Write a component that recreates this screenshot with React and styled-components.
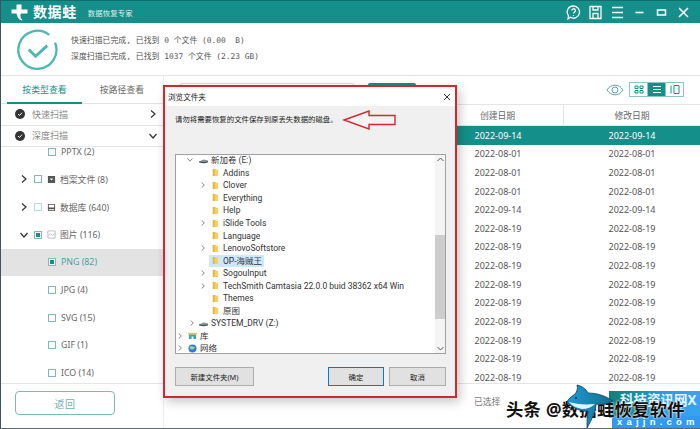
import React from "react";
import styled, { createGlobalStyle } from "styled-components";

const Global = createGlobalStyle`
  html, body { margin: 0; padding: 0; background: #fff; }
  body { font-family: "Noto Sans", "Noto Sans CJK SC", sans-serif; overflow: hidden; }
  * { box-sizing: border-box; }
`;

const teal = "#148f8a";

const Win = styled.div`
  position: relative; width: 700px; height: 429px; background: #fff; overflow: hidden;
  display: flex; flex-direction: column;
  border-left: 1px solid #3c5560; border-bottom: 1px solid #5a6a70;
`;
const Header = styled.header`
  height: 23px; flex: none; background: ${teal}; display: flex; align-items: center; color: #fff;
  border-top: 1px solid #0d6f6c; padding-left: 10px;
`;
const Brand = styled.div`font-size: 14px; font-weight: 700; letter-spacing: .6px; margin-left: 5px; line-height: 22px;`;
const Slogan = styled.div`font-size: 7.4px; margin-left: 11px; opacity: .85; letter-spacing: .1px;`;
const HeadIcons = styled.div`margin-left: auto; display: flex; align-items: center; gap: 7px; padding-right: 9px;`;
const HeadIcon = styled.svg`width: 15px; height: 15px; fill: none; stroke: #fff; stroke-width: 1.3; display: block;`;

const Summary = styled.section`
  height: 53px; flex: none; display: flex; align-items: center; padding-left: 16px; border-bottom: 1px solid #e2e4e4;
`;
const Ok = styled.svg`width: 41px; height: 41px; fill: none; flex: none;`;
const SummaryText = styled.div`
  margin-left: 13px; display: flex; flex-direction: column; gap: 6.5px;
  font-size: 7.9px; line-height: 10px; color: #555; font-family: "DejaVu Sans Mono", "Noto Sans CJK SC", monospace; white-space: pre;
`;

const Main = styled.main`flex: 1; min-height: 0; display: flex;`;
const Side = styled.aside`width: 162px; flex: none; display: flex; flex-direction: column;`;
const Tabs = styled.div`height: 28px; flex: none; display: flex; border-bottom: 1px solid #dfe3e3; padding-left: 6px;`;
const Tab = styled.div`
  width: ${p => p.$on ? "75px" : "80px"}; display: flex; align-items: center; justify-content: center; font-size: 8.8px; letter-spacing: .1px;
  color: ${p => p.$on ? teal : "#666"}; border-bottom: ${p => p.$on ? `2px solid ${teal}` : "none"};
  height: ${p => p.$on ? "28px" : "27px"};
`;
const Acc = styled.div`
  height: 21.5px; flex: none; display: flex; align-items: center; padding-left: 14px; padding-right: 4px;
  border-bottom: 1px solid #e4e6e6; font-size: 9px; color: #888; gap: 7px;
`;
const Dot = styled.svg`width: 10px; height: 10px; flex: none;`;
const AccCaret = styled.svg`width: 8px; height: 8px; margin-left: auto; fill: none; stroke: #333; stroke-width: 1.2; margin-right: 2px;`;
const Tree = styled.div`flex: 1; min-height: 0; overflow: hidden;`;
const TreeInner = styled.div`margin-top: -9px;`;
const TreeRow = styled.div`
  height: 27.65px; display: flex; align-items: center; position: relative;
  padding-left: ${p => p.$child ? "47px" : "19px"};
  background: ${p => p.$on ? "#e3e3e3" : "transparent"};
  font-size: 8.8px; color: ${p => p.$on ? "#3fa5a0" : "#666"};
`;
const Caret = styled.svg`width: 8px; height: 8px; flex: none; fill: none; stroke: #333; stroke-width: 1.2; margin-right: 6px;`;
const Check = styled.span`
  width: 8px; height: 8px; flex: none; border: 1px solid ${p => p.$pale ? "#b5dcda" : "#7fb9b6"}; background: #fff;
  display: flex; align-items: center; justify-content: center; margin-right: 5px;
  &::after { content: ""; display: ${p => p.$on ? "block" : "none"}; width: 4px; height: 4px; background: ${teal}; }
`;
const Glyph = styled.svg`width: 9px; height: 9px; flex: none; margin-right: 4px;`;
const SideFoot = styled.div`height: 45px; flex: none; border-top: 1px solid #e4e6e6; padding: 7px 0 0 14px;`;
const BackBtn = styled.div`
  width: 100px; height: 24px; border: 1px solid #7fb9b6; border-radius: 4px; color: #6fb2ae; font-size: 10px;
  display: flex; align-items: center; justify-content: center; letter-spacing: .5px;
`;

const Right = styled.div`flex: 1; min-width: 0; display: flex; flex-direction: column; border-left: 1px solid #eceeee;`;
const Tools = styled.div`height: 28px; flex: none; display: flex; align-items: flex-start; padding-top: 7px; position: relative;`;
const Search = styled.div`width: 176px; height: 16px; margin-left: 15px; border: 1px solid #ddd; border-radius: 3px;`;
const SearchBtn = styled.div`width: 48px; height: 16px; margin-left: 13px; background: ${teal}; border-radius: 2px;`;
const ViewBox = styled.div`margin-left: auto; display: flex; align-items: center; margin-right: 16px; margin-top: -1px;`;
const Eye = styled.svg`width: 18px; height: 12px; fill: none; stroke: #5aa9a6; stroke-width: 1; margin-right: 6px;`;
const ViewBtn = styled.div`
  width: 19px; height: 15px; display: flex; align-items: center; justify-content: center;
  border: 1px solid #8fc4c1; margin-left: -1px; background: ${p => p.$on ? teal : "#fff"};
`;
const ViewGlyph = styled.svg`width: 10px; height: 9px; fill: none; stroke: ${p => p.$on ? "#fff" : teal}; stroke-width: 1;`;

const Grid = styled.div`
  display: grid; grid-template-columns: 268px 132px 136px; align-items: center;
`;
const THead = styled(Grid)`height: 22px; flex: none; border-bottom: 1px solid #e4e6e6; border-top: 1px solid #e4e6e6; font-size: 8.8px; color: #666;`;
const Th = styled.div`text-align: center; height: 100%; display: flex; align-items: center; justify-content: center; border-right: ${p => p.$line ? "1px solid #e4e6e6" : "none"};`;
const Rows = styled.div`flex: 1; min-height: 0; overflow: hidden;`;
const Row = styled(Grid)`
  height: 18.62px; font-size: 9px; color: ${p => p.$on ? "#fff" : "#555"};
  background: ${p => p.$on ? teal : "#fff"};
`;
const Td = styled.div`text-align: center;`;
const Foot = styled.div`height: 45px; flex: none; border-top: 1px solid #e4e6e6; padding: 11px 0 0 310px; font-size: 8.8px; color: #777;`;

const Dialog = styled.div`
  position: absolute; left: 162px; top: 85px; width: 294px; height: 313px;
  border: 2px solid #d3262f; background: #f0f0f0; display: flex; flex-direction: column;
  box-shadow: 3px 4px 10px rgba(0,0,0,.22);
`;
const DlgTitle = styled.div`height: 19px; flex: none; background: #fff; display: flex; align-items: center; justify-content: space-between; padding: 0 4px 0 3px; font-size: 7.6px; color: #222;`;
const DlgClose = styled.svg`width: 8px; height: 8px; stroke: #222; stroke-width: .9; fill: none;`;
const DlgMsg = styled.div`height: 48px; flex: none; padding: 7px 0 0 10px; font-size: 7.4px; line-height: 12px; color: #222;`;
const Arrow = styled.svg`position: absolute; left: 178px; top: 23px; width: 54px; height: 20px; overflow: visible;`;
const Box = styled.div`
  margin-left: 10px; width: 271px; height: 200px; flex: none; background: #fff; border: 1px solid #a0a0a0;
  display: flex; position: relative;
`;
const BoxList = styled.div`flex: 1; overflow: hidden; margin-top: -1px;`;
const Scroll = styled.div`
  width: 10px; flex: none; background: #f4f4f4; position: relative; display: flex; flex-direction: column; justify-content: space-between; align-items: center; padding: 2px 0;
`;
const Thumb = styled.div`position: absolute; left: 0; right: 0; top: 80px; height: 84px; background: #cdcdcd;`;
const ScrollArrow = styled.svg`width: 7px; height: 5px; fill: none; stroke: #555; stroke-width: 1;`;
const DItem = styled.div`
  height: 12.55px; line-height: 12px; display: flex; align-items: center; padding-left: ${p => p.$x}px;
  font-family: Roboto, "Noto Sans CJK SC", sans-serif; font-size: 8.5px; color: #333; white-space: nowrap;
`;
const DCaret = styled.svg`width: 6px; height: 6px; flex: none; fill: none; stroke: #888; stroke-width: 1; margin-right: ${p => p.$gap || 5}px; visibility: ${p => p.$hide ? "hidden" : "visible"};`;
const DIcon = styled.svg`width: 9px; height: 9px; flex: none; margin-right: 3px;`;
const DSel = styled.span`display: inline-flex; align-items: center; margin-left: -2px; padding: 0 2px; background: ${p => p.$sel ? "#cce8ff" : "transparent"};`;
const DlgBtns = styled.div`flex: 1; display: flex; align-items: flex-start; padding: 13px 0 0 10px;`;
const DBtn = styled.div`
  width: ${p => p.$w}px; height: 19px; margin-left: ${p => p.$ml || 0}px; flex: none; background: #e1e1e1;
  border: 1px solid ${p => p.$primary ? "#0078d7" : "#adadad"}; display: flex; align-items: center; justify-content: center;
  font-size: 7.4px; color: #222;
`;

const Mark = styled.div`
  position: absolute; left: 505px; top: 399px; font-size: 17.3px; line-height: 22px; font-weight: 700; color: #111; white-space: nowrap;
  text-shadow: 0 0 2px #fff, 0 0 2px #fff; z-index: 3; letter-spacing: .3px;
`;
const Strip = styled.div`
  position: absolute; left: 608px; top: 391px; width: 91px; height: 27px; overflow: hidden;
  background: linear-gradient(90deg, #127f78 0%, #1590a0 30%, #2b9be8 60%, #3aa3f0 100%);
  color: #e4f4ff; font-size: 13.5px; line-height: 18px; font-weight: 700; padding-left: 11px; white-space: nowrap;
`;
const Site = styled.div`
  position: absolute; left: 611px; top: 416px; width: 88px; height: 12px; background: #2f9af0; color: #fff;
  font: 700 9.5px/12px "Liberation Sans", sans-serif; letter-spacing: 4.2px; padding-left: 5px; white-space: nowrap;
`;
const Shark = styled.svg`position: absolute; left: 565px; top: 384px; width: 48px; height: 45px; z-index: 4;`;

const Folder = () => (
  <DIcon viewBox="0 0 10 10"><path d="M2 1h3l1 1h2v7H2z" fill="#f6cf6a" /><path d="M2 1h2v8H2z" fill="#e8b53f" /></DIcon>
);
const Drive = () => (
  <DIcon viewBox="0 0 10 10"><path d="M0 6l5-2 5 1v2l-5 1-5-1z" fill="#8a8f93" /><path d="M0 6l5 1 5-1v1l-5 1-5-1z" fill="#3b3f42" /></DIcon>
);
const Lib = () => (
  <DIcon viewBox="0 0 10 10"><path d="M0 2h10v2H0z" fill="#e8c25a" /><path d="M1 4h8v5H6V6H4v3H1z" fill="#3f9fc7" /></DIcon>
);
const Net = () => (
  <DIcon viewBox="0 0 10 10"><circle cx="5" cy="5" r="4.5" fill="#2f7fd0" /><path d="M2 3c2-1 4 0 6 1-1 2-4 3-6 1z" fill="#9fd59a" /></DIcon>
);
const DC = ({ open, hide, gap }) => (
  <DCaret viewBox="0 0 6 6" $hide={hide} $gap={gap}><path d={open ? "M.5 1.5L3 4.2 5.5 1.5" : "M1.7.5L4.4 3 1.7 5.5"} /></DCaret>
);

const sideRows = [
  { t: "PPTX (2)", child: true },
  { t: "档案文件 (8)", caret: "r", icon: "a" },
  { t: "数据库 (640)", caret: "r", icon: "d", pale: true },
  { t: "图片 (116)", caret: "d", icon: "p", on: true },
  { t: "PNG (82)", child: true, sel: true, on: true },
  { t: "JPG (4)", child: true },
  { t: "SVG (15)", child: true },
  { t: "GIF (1)", child: true },
  { t: "ICO (14)", child: true },
];
const dates = ["09-14","08-01","08-01","08-01","09-14","08-19","08-19","08-19","08-19","08-19","08-19","08-19","08-19","08-19"];
const folders = [
  ["Addins"], ["Clover", 1], ["Everything"], ["Help"], ["iSlide Tools", 1], ["Language"], ["LenovoSoftstore", 1],
  ["OP-海贼王", 0, 1], ["SogouInput", 1], ["TechSmith Camtasia 22.0.0 buid 38362 x64 Win", 1], ["Themes"], ["原图"],
];
const SideGlyph = ({ k }) => (
  <Glyph viewBox="0 0 10 10">
    {k === "a" && <path d="M1 1h8v8H1z M3 4l2 2 2-2z" fill="#555" />}
    {k === "d" && <path d="M1 1h8v8H1zM2 2v3h6V2zM2 7v1h6V7z" fill="#555" fillRule="evenodd" />}
    {k === "p" && <path d="M1 1h8v8H1zM1 7l3-3 2 2 3-2" fill="none" stroke="#aaa" strokeWidth=".8" />}
  </Glyph>
);

export default function App() {
  return (
    <Win>
      <Global />
      <Header>
        <svg width="17" height="17" viewBox="0 0 17 17">
          <path d="M5.500 0.500h5v5h6v4h-6.500c-1 1.500-1 4 1.500 7-3.500-.5-5.500-3.500-6-7H0.500v-4h5z" fill="#fff" />
        </svg>
        <Brand>数据蛙</Brand>
        <Slogan>数据恢复专家</Slogan>
        <HeadIcons>
          <HeadIcon viewBox="0 0 15 15"><path d="M7.500 1a6 6 0 1 1-3 11.200L2 14l.6-3.200A6 6 0 0 1 7.500 1z" /><path d="M5.800 5.600a1.800 1.800 0 1 1 2.600 1.600c-.6.400-.9.700-.9 1.400M7.500 10v1" /></HeadIcon>
          <HeadIcon viewBox="0 0 15 15"><path d="M2 1.500h11v12H2zM5 1.500v3.500h5V1.500M5 13.500V8.500h5v5" /></HeadIcon>
          <HeadIcon viewBox="0 0 15 15"><path d="M2 2.500h11M2 7.500h11M2 12.500h11" /></HeadIcon>
          <HeadIcon viewBox="0 0 15 15"><path d="M3.500 7.500h8" strokeWidth="1.600" /></HeadIcon>
          <HeadIcon viewBox="0 0 15 15"><path d="M3.500 5h8v5h-8z" strokeWidth="1.500" /></HeadIcon>
          <HeadIcon viewBox="0 0 15 15"><path d="M3 3l9 9M12 3l-9 9" strokeWidth="1.600" /></HeadIcon>
        </HeadIcons>
      </Header>
      <Summary>
        <Ok viewBox="0 0 42 42">
          <path d="M33 6A19.500 19.500 0 1 0 39 14" stroke="#4cb8b2" strokeWidth="2.400" />
          <path d="M12 21l7 7 12-11" stroke="#4cb8b2" strokeWidth="3" />
        </Ok>
        <SummaryText>
          <div>快速扫描已完成, 已找到 0 个文件 (0.00  B)</div>
          <div>深度扫描已完成, 已找到 1037 个文件 (2.23 GB)</div>
        </SummaryText>
      </Summary>
      <Main>
        <Side>
          <Tabs>
            <Tab $on>按类型查看</Tab>
            <Tab>按路径查看</Tab>
          </Tabs>
          <Acc>
            <Dot viewBox="0 0 10 10"><circle cx="5" cy="5" r="5" fill="#333" /><path d="M3 5l1.500 1.500L7 3.700" stroke="#fff" fill="none" /></Dot>
            快速扫描
            <AccCaret viewBox="0 0 8 8"><path d="M2 .5L6 4 2 7.500" /></AccCaret>
          </Acc>
          <Acc>
            <Dot viewBox="0 0 10 10"><circle cx="5" cy="5" r="5" fill="#333" /><path d="M3 5l1.500 1.500L7 3.700" stroke="#fff" fill="none" /></Dot>
            深度扫描
            <AccCaret viewBox="0 0 8 8"><path d="M.5 2L4 6l3.500-4" /></AccCaret>
          </Acc>
          <Tree>
            <TreeInner>
              {sideRows.map(r => (
                <TreeRow key={r.t} $child={r.child} $on={r.sel}>
                  {r.caret && (
                    <Caret viewBox="0 0 8 8"><path d={r.caret === "r" ? "M2 .5L6 4 2 7.500" : "M.5 2L4 6l3.500-4"} /></Caret>
                  )}
                  <Check $on={r.on} $pale={r.pale} />
                  {r.icon && <SideGlyph k={r.icon} />}
                  {r.t}
                </TreeRow>
              ))}
            </TreeInner>
          </Tree>
          <SideFoot><BackBtn>返回</BackBtn></SideFoot>
        </Side>
        <Right>
          <Tools>
            <Search />
            <SearchBtn />
            <ViewBox>
              <Eye viewBox="0 0 18 12"><path d="M1 6c4-6.500 12-6.500 16 0-4 6.500-12 6.500-16 0z" /><circle cx="9" cy="6" r="3" /></Eye>
              <ViewBtn><ViewGlyph viewBox="0 0 10 9"><path d="M1 1h3v2.500H1zM6 1h3v2.500H6zM1 5.500h3V8H1zM6 5.500h3V8H6z" /></ViewGlyph></ViewBtn>
              <ViewBtn $on><ViewGlyph $on viewBox="0 0 10 9"><path d="M1 1.500h8M1 4.500h8M1 7.500h8" /></ViewGlyph></ViewBtn>
              <ViewBtn><ViewGlyph viewBox="0 0 10 9"><path d="M1 .5v8M4 .5h5v8H4z" /></ViewGlyph></ViewBtn>
            </ViewBox>
          </Tools>
          <THead>
            <Th />
            <Th $line>创建日期</Th>
            <Th>修改日期</Th>
          </THead>
          <Rows>
            {dates.map((d, i) => (
              <Row key={i} $on={i === 0}>
                <Td />
                <Td>2022-{d}</Td>
                <Td>2022-{d}</Td>
              </Row>
            ))}
          </Rows>
          <Foot>已选择</Foot>
        </Right>
      </Main>

      <Dialog>
        <DlgTitle>
          浏览文件夹
          <DlgClose viewBox="0 0 8 8"><path d="M1 1l6 6M7 1L1 7" /></DlgClose>
        </DlgTitle>
        <DlgMsg>请勿将需要恢复的文件保存到原丢失数据的磁盘。</DlgMsg>
        <Arrow viewBox="0 0 54 20">
          <path d="M1 10L26 1v4.500h26v9H26V19z" fill="#f3f3f3" stroke="#d3262f" strokeWidth="1.400" />
        </Arrow>
        <Box>
          <BoxList>
            <DItem $x={11}><DC open gap={6} /><Drive />新加卷 (E:)</DItem>
            {folders.map(([name, caret, sel]) => (
              <DItem key={name} $x={24}>
                <DC hide={!caret} gap={5} />
                <DSel $sel={sel}><Folder />{name}</DSel>
              </DItem>
            ))}
            <DItem $x={13}><DC gap={4} /><Drive />SYSTEM_DRV (Z:)</DItem>
            <DItem $x={1}><DC gap={5} /><Lib />库</DItem>
            <DItem $x={1}><DC gap={5} /><Net />网络</DItem>
          </BoxList>
          <Scroll>
            <ScrollArrow viewBox="0 0 7 5"><path d="M.5 4L3.500 1 6.500 4" /></ScrollArrow>
            <Thumb />
            <ScrollArrow viewBox="0 0 7 5"><path d="M.5 1L3.500 4 6.500 1" /></ScrollArrow>
          </Scroll>
        </Box>
        <DlgBtns>
          <DBtn $w={79}>新建文件夹(M)</DBtn>
          <DBtn $w={56} $ml={74} $primary>确定</DBtn>
          <DBtn $w={57} $ml={5}>取消</DBtn>
        </DlgBtns>
      </Dialog>

      <Strip>科技资讯网X</Strip>
      <Site>xajjn.com</Site>
      <Mark>头条 @数据蛙恢复软件</Mark>
      <Shark viewBox="0 0 48 45">
        <defs>
          <linearGradient id="sharkBody" x1="0" y1="0" x2="1" y2="0">
            <stop offset="0" stopColor="#1a9ad6" />
            <stop offset="1" stopColor="#176f8c" />
          </linearGradient>
        </defs>
        <path d="M11 1c5 1 9 4 11 8 9 0 18 3 25 8-5 3-10 4-17 3 0 7-4 15-9 24 0-7 0-12 1-17-7 1-15-3-21-9 1-3 4-5 8-8 2-2 3-6 2-9z" fill="url(#sharkBody)" stroke="#0b3d62" strokeWidth=".8" />
        <path d="M3 18c7 2 15 3 26 2-3 3-8 5-13 5-5-1-10-3-13-7z" fill="#dff3ff" />
        <circle cx="10" cy="14" r="1" fill="#123" />
      </Shark>
    </Win>
  );
}
